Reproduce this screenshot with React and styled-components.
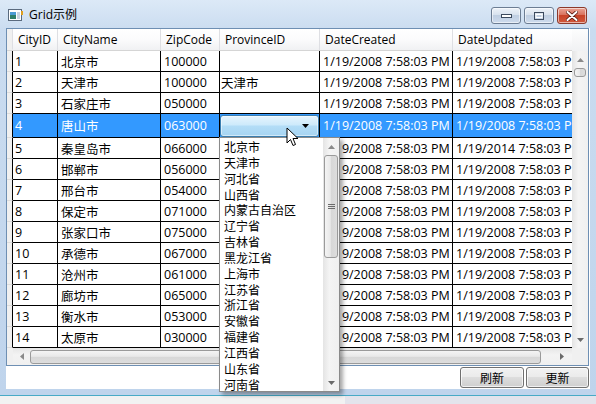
import React from "react";
import styled, { createGlobalStyle } from "styled-components";

const GlobalStyle = createGlobalStyle`
  html, body { margin: 0; padding: 0; }
  body {
    width: 596px;
    height: 404px;
    overflow: hidden;
    background: #efefef;
    font-family: "Open Sans", "Noto Sans CJK SC", sans-serif;
    font-size: 12px;
    color: #000;
  }
`;

const cities = [
  ["1", "北京市", "100000", "", "1/19/2008 7:58:03 PM", "1/19/2008 7:58:03 PM"],
  ["2", "天津市", "100000", "天津市", "1/19/2008 7:58:03 PM", "1/19/2008 7:58:03 PM"],
  ["3", "石家庄市", "050000", "", "1/19/2008 7:58:03 PM", "1/19/2008 7:58:03 PM"],
  ["4", "唐山市", "063000", "", "1/19/2008 7:58:03 PM", "1/19/2008 7:58:03 PM"],
  ["5", "秦皇岛市", "066000", "", "1/19/2008 7:58:03 PM", "1/19/2014 7:58:03 PM"],
  ["6", "邯郸市", "056000", "", "1/19/2008 7:58:03 PM", "1/19/2008 7:58:03 PM"],
  ["7", "邢台市", "054000", "", "1/19/2008 7:58:03 PM", "1/19/2008 7:58:03 PM"],
  ["8", "保定市", "071000", "", "1/19/2008 7:58:03 PM", "1/19/2008 7:58:03 PM"],
  ["9", "张家口市", "075000", "", "1/19/2008 7:58:03 PM", "1/19/2008 7:58:03 PM"],
  ["10", "承德市", "067000", "", "1/19/2008 7:58:03 PM", "1/19/2008 7:58:03 PM"],
  ["11", "沧州市", "061000", "", "1/19/2008 7:58:03 PM", "1/19/2008 7:58:03 PM"],
  ["12", "廊坊市", "065000", "", "1/19/2008 7:58:03 PM", "1/19/2008 7:58:03 PM"],
  ["13", "衡水市", "053000", "", "1/19/2008 7:58:03 PM", "1/19/2008 7:58:03 PM"],
  ["14", "太原市", "030000", "", "1/19/2008 7:58:03 PM", "1/19/2008 7:58:03 PM"],
];

const provinces = [
  "北京市", "天津市", "河北省", "山西省", "内蒙古自治区", "辽宁省", "吉林省", "黑龙江省",
  "上海市", "江苏省", "浙江省", "安徽省", "福建省", "江西省", "山东省", "河南省",
];

const columns = [
  { title: "CityID", width: 45, pad: 2 },
  { title: "CityName", width: 103, pad: 3 },
  { title: "ZipCode", width: 59, pad: 3 },
  { title: "ProvinceID", width: 100, pad: 1 },
  { title: "DateCreated", width: 133, pad: 3 },
  { title: "DateUpdated", width: 140, pad: 3 },
];

const Page = styled.div`
  display: flex;
  flex-direction: column;
  width: 596px;
  height: 404px;
`;

const Window = styled.div`
  position: relative;
  height: 395px;
  box-sizing: border-box;
  display: flex;
  flex-direction: column;
  padding: 0 6px 6px 6px;
  background: linear-gradient(#dce9f7, #cadcf0 30px, #bfd4ec);
`;

const TitleBar = styled.div`
  height: 28px;
  display: flex;
  align-items: flex-start;
`;

const TitleIcon = styled.svg`
  margin: 9px 0 0 2px;
  flex-shrink: 0;
`;

const TitleText = styled.div`
  margin: 6px 0 0 6px;
  font-size: 12px;
  line-height: 18px;
  color: #000;
  flex: 1;
`;

const Controls = styled.div`
  display: flex;
  gap: 3px;
  margin: 7px 3px 0 0;
`;

const CtrlButton = styled.div`
  width: ${(p) => p.$w}px;
  height: 17px;
  box-sizing: border-box;
  border: 1px solid ${(p) => (p.$close ? "#8c3a2c" : "#6c7d93")};
  border-radius: 3px;
  display: flex;
  align-items: center;
  justify-content: center;
  box-shadow: inset 0 0 0 1px rgba(255, 255, 255, 0.55);
  background: ${(p) =>
    p.$close
      ? "linear-gradient(#eaa597, #d9735e 45%, #c84328 50%, #d0583c 100%)"
      : "linear-gradient(#eef3f9, #d8e2ee 45%, #c0cfe2 50%, #cddbed 100%)"};
`;

const Client = styled.div`
  flex: 1;
  background: #fff;
  display: flex;
  flex-direction: column;
`;

const GridFrame = styled.div`
  height: 338px;
  width: 583px;
  box-sizing: border-box;
  border: 1px solid #6e8fb3;
  display: flex;
  overflow: hidden;
`;

const GridMain = styled.div`
  width: 565px;
  display: flex;
  flex-direction: column;
  overflow: hidden;
`;

const HeaderRow = styled.div`
  height: 22px;
  display: flex;
  flex-shrink: 0;
  background: linear-gradient(#ffffff, #fbfbfc 50%, #f0f1f3);
  border-bottom: 1px solid #d5d5d5;
  box-sizing: border-box;
`;

const HeaderCell = styled.div`
  width: ${(p) => p.$w}px;
  flex-shrink: 0;
  box-sizing: border-box;
  padding-left: 5px;
  border-right: 1px solid #dedfe3;
  line-height: 22px;
  white-space: nowrap;
  overflow: hidden;
`;

const RowHead = styled.div`
  width: 6px;
  height: ${(p) => (p.$fill ? "17px" : "auto")};
  flex-shrink: 0;
  box-sizing: border-box;
  background: #f0f0f0;
  border-right: 1px solid ${(p) => (p.$header ? "#dedfe3" : p.$fill ? "#f0f0f0" : "#000")};
  border-bottom: 1px solid ${(p) => (p.$header || p.$fill ? "transparent" : "#dcdcdc")};
`;

const Rows = styled.div`
  height: 297px;
  flex-shrink: 0;
  overflow: hidden;
`;

const Row = styled.div`
  height: ${(p) => (p.$selected ? 24 : 21)}px;
  display: flex;
`;

const Cell = styled.div`
  width: ${(p) => p.$w}px;
  flex-shrink: 0;
  box-sizing: border-box;
  padding-left: ${(p) => p.$pad}px;
  border-right: 1px solid #000;
  border-bottom: 1px solid #000;
  background: ${(p) => (p.$selected ? "#3399ff" : "#fff")};
  color: ${(p) => (p.$selected ? "#fff" : "#000")};
  font-size: 12.5px;
  display: flex;
  align-items: center;
  white-space: nowrap;
  overflow: hidden;
`;

const Combo = styled.div`
  width: 99px;
  height: 22px;
  margin: 0 0 0 -1px;
  box-sizing: border-box;
  border: 1px solid #3c7fb1;
  border-radius: 3px;
  background: linear-gradient(#e6f4fd, #cdeafb 45%, #b3ddf7 50%, #a6d4f2);
  box-shadow: inset 0 0 0 1px rgba(255, 255, 255, 0.5);
  display: flex;
  align-items: center;
  justify-content: flex-end;
  padding-right: 9px;
`;

const HScroll = styled.div`
  height: 17px;
  flex-shrink: 0;
  display: flex;
  align-items: center;
  background: linear-gradient(#e6e6e6, #f3f3f3 40%, #f0f0f0);
`;

const ArrowBox = styled.div`
  width: ${(p) => p.$w || 16}px;
  height: ${(p) => p.$h || 16}px;
  flex-shrink: 0;
  display: flex;
  align-items: center;
  justify-content: center;
`;

const HThumb = styled.div`
  width: 511px;
  height: 14px;
  box-sizing: border-box;
  border: 1px solid #9a9a9a;
  border-radius: 3px;
  background: linear-gradient(#f4f4f4, #e8e8e8 45%, #d7d7d7 50%, #dddddd);
`;

const Side = styled.div`
  width: 16px;
  display: flex;
  flex-direction: column;
`;

const Corner = styled.div`
  height: ${(p) => p.$h}px;
  flex-shrink: 0;
  background: ${(p) => (p.$top ? "linear-gradient(#fdfdfd, #f0f1f3)" : "#f0f0f0")};
`;

const VScroll = styled.div`
  height: ${(p) => p.$h}px;
  flex-shrink: 0;
  display: flex;
  flex-direction: column;
  align-items: center;
  background: linear-gradient(90deg, #e4e4e4, #f4f4f4 40%, #f0f0f0);
`;

const VThumb = styled.div`
  width: ${(p) => p.$w}px;
  height: ${(p) => p.$h}px;
  box-sizing: border-box;
  border: 1px solid #9a9a9a;
  border-radius: 3px;
  background: linear-gradient(90deg, #f4f4f4, #e8e8e8 45%, #d7d7d7 50%, #dddddd);
  display: flex;
  align-items: center;
  justify-content: center;
`;

const Spacer = styled.div`
  flex: 1;
`;

const ButtonBar = styled.div`
  margin-top: 1px;
  height: 21px;
  display: flex;
  justify-content: flex-end;
  gap: 2px;
  padding-right: 1px;
`;

const Button = styled.div`
  width: ${(p) => p.$w}px;
  box-sizing: border-box;
  border: 1px solid #707070;
  border-radius: 3px;
  background: linear-gradient(#f2f2f2, #ebebeb 45%, #dddddd 50%, #cfcfcf);
  box-shadow: inset 0 0 0 1px rgba(255, 255, 255, 0.7);
  display: flex;
  align-items: center;
  justify-content: center;
  font-size: 12px;
`;

const Popup = styled.div`
  position: absolute;
  left: 219px;
  top: 137px;
  width: 121px;
  height: 255px;
  box-sizing: border-box;
  border: 1px solid #8a8a8a;
  background: #fff;
  box-shadow: 3px 3px 4px rgba(0, 0, 0, 0.35);
  display: flex;
`;

const List = styled.div`
  flex: 1;
  padding: 1px 0 0 4px;
  overflow: hidden;
`;

const Item = styled.div`
  height: 15.85px;
  line-height: 15.85px;
  font-family: "Noto Sans CJK SC", sans-serif;
  white-space: nowrap;
`;

const Cursor = styled.svg`
  position: absolute;
  left: 286px;
  top: 127px;
`;

const Bottom = styled.div`
  flex: 1;
  display: flex;
  border-top: 1px solid #48aac6;
  box-shadow: inset 0 1px 0 #1e2a2e;
`;

const BottomPart = styled.div`
  width: ${(p) => (p.$w ? `${p.$w}px` : "auto")};
  flex: ${(p) => (p.$w ? "none" : "1")};
  background: ${(p) => p.$bg};
`;

const Tri = ({ dir, color = "#6a6a6a" }) => {
  const pts = {
    up: "0,4 3.5,0 7,4",
    down: "0,0 7,0 3.5,4",
    left: "4,0 4,7 0,3.5",
    right: "0,0 0,7 4,3.5",
  }[dir];
  const vertical = dir === "up" || dir === "down";
  return (
    <svg width={vertical ? 7 : 4} height={vertical ? 4 : 7}>
      <polygon points={pts} fill={color} />
    </svg>
  );
};

const App = () => (
  <Page>
    <GlobalStyle />
    <Window>
      <TitleBar>
        <TitleIcon width="15" height="12" viewBox="0 0 15 12">
          <rect x="0.5" y="0.5" width="13" height="11" fill="#fff" stroke="#5a6a7e" />
          <rect x="2" y="3" width="6" height="7" fill="#2f7f6a" />
          <rect x="2" y="3" width="6" height="3" fill="#4a9bd4" />
          <rect x="9" y="3" width="3" height="7" fill="#c8d4e0" />
          <rect x="13" y="2" width="2" height="4" fill="#e0a020" />
        </TitleIcon>
        <TitleText>Grid示例</TitleText>
        <Controls>
          <CtrlButton $w={30}>
            <svg width="11" height="4">
              <rect x="0.5" y="0.5" width="10" height="3" fill="#fff" stroke="#3c4a5e" />
            </svg>
          </CtrlButton>
          <CtrlButton $w={30}>
            <svg width="10" height="8">
              <rect x="0.5" y="0.5" width="9" height="7" fill="none" stroke="#3c4a5e" />
              <rect x="2" y="2.5" width="6" height="3" fill="none" stroke="#fff" />
            </svg>
          </CtrlButton>
          <CtrlButton $w={30} $close>
            <svg width="12" height="10" viewBox="0 0 12 10">
              <path d="M1.5 1 L10.5 9 M10.5 1 L1.5 9" stroke="#5a1a10" strokeWidth="3.6" strokeLinecap="round" />
              <path d="M1.5 1 L10.5 9 M10.5 1 L1.5 9" stroke="#fff" strokeWidth="2" strokeLinecap="round" />
            </svg>
          </CtrlButton>
        </Controls>
      </TitleBar>
      <Client>
        <GridFrame>
          <GridMain>
            <HeaderRow>
              <RowHead $header />
              {columns.map((c) => (
                <HeaderCell key={c.title} $w={c.width}>
                  {c.title}
                </HeaderCell>
              ))}
            </HeaderRow>
            <Rows>
              {cities.map((r, i) => {
                const selected = i === 3;
                return (
                  <Row key={r[0]} $selected={selected}>
                    <RowHead />
                    {columns.map((c, j) => (
                      <Cell key={c.title} $w={c.width} $pad={c.pad} $selected={selected}>
                        {selected && j === 3 ? (
                          <Combo>
                            <Tri dir="down" color="#000" />
                          </Combo>
                        ) : (
                          r[j]
                        )}
                      </Cell>
                    ))}
                  </Row>
                );
              })}
            </Rows>
            <HScroll>
              <RowHead $fill />
              <ArrowBox $w={17}>
                <Tri dir="left" color="#8a8a8a" />
              </ArrowBox>
              <HThumb />
              <Spacer />
              <ArrowBox $w={20}>
                <Tri dir="right" color="#6a6a6a" />
              </ArrowBox>
            </HScroll>
          </GridMain>
          <Side>
            <Corner $h={22} $top />
            <VScroll $h={297}>
              <ArrowBox $h={17}>
                <Tri dir="up" color="#8a8a8a" />
              </ArrowBox>
              <VThumb $w={12} $h={9} />
              <Spacer />
              <ArrowBox $h={17}>
                <Tri dir="down" color="#6a6a6a" />
              </ArrowBox>
            </VScroll>
            <Corner $h={17} />
          </Side>
        </GridFrame>
        <ButtonBar>
          <Button $w={64}>刷新</Button>
          <Button $w={63}>更新</Button>
        </ButtonBar>
      </Client>
      <Popup>
        <List>
          {provinces.map((p) => (
            <Item key={p}>{p}</Item>
          ))}
        </List>
        <VScroll $h={253}>
          <ArrowBox $h={17}>
            <Tri dir="up" color="#8a8a8a" />
          </ArrowBox>
          <VThumb $w={14} $h={103}>
            <svg width="7" height="7">
              <path d="M0 1.5 H7 M0 3.5 H7 M0 5.5 H7" stroke="#6a6a6a" strokeWidth="1" />
            </svg>
          </VThumb>
          <Spacer />
          <ArrowBox $h={17}>
            <Tri dir="down" color="#6a6a6a" />
          </ArrowBox>
        </VScroll>
      </Popup>
      <Cursor width="13" height="20" viewBox="0 0 13 20">
        <path
          d="M1 1 L1 16 L4.5 12.5 L7 18.5 L9.5 17.5 L7 11.5 L12 11.5 Z"
          fill="#fff"
          stroke="#000"
          strokeWidth="1"
          strokeLinejoin="round"
        />
      </Cursor>
    </Window>
    <Bottom>
      <BottomPart $w={345} $bg="#f2f2f2" />
      <BottomPart $bg="#e3e4ec" />
    </Bottom>
  </Page>
);

export default App;
